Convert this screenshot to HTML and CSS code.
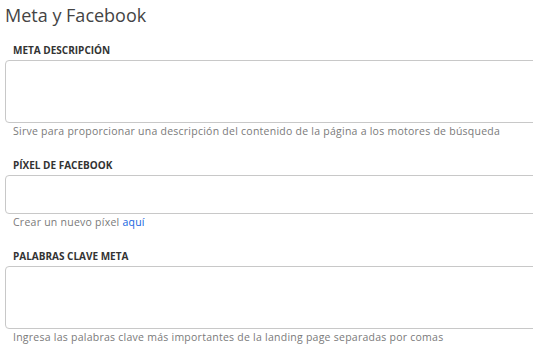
FILE: index.html
```html
<!DOCTYPE html>
<html lang="es">
<head>
<meta charset="utf-8">
<link rel="stylesheet" href="styles.css">
</head>
<body>
<section class="panel">
  <h2 class="title">Meta y Facebook</h2>
  <div class="field">
    <label class="label">META DESCRIPCIÓN</label>
    <textarea class="control area"></textarea>
    <p class="help">Sirve para proporcionar una descripción del contenido de la página a los motores de búsqueda</p>
  </div>
  <div class="field">
    <label class="label">PÍXEL DE FACEBOOK</label>
    <input class="control input" type="text">
    <p class="help">Crear un nuevo píxel <a class="link" href="#">aquí</a></p>
  </div>
  <div class="field">
    <label class="label">PALABRAS CLAVE META</label>
    <textarea class="control area"></textarea>
    <p class="help">Ingresa las palabras clave más importantes de la landing page separadas por comas</p>
  </div>
</section>
</body>
</html>
```

FILE: styles.css
```css
html, body {
  margin: 0;
  padding: 0;
  overflow: hidden;
  background: #fff;
}
body {
  font-family: "Open Sans", "Noto Sans", sans-serif;
  color: #444;
}
.panel {
  padding: 3px 0 0 5px;
  display: flex;
  flex-direction: column;
}
.title {
  margin: 0;
  font-size: 18px;
  line-height: 24px;
  font-weight: 500;
  letter-spacing: 0;
  color: #444;
}
.field {
  display: flex;
  flex-direction: column;
  margin-top: 20px;
}
.title + .field {
  margin-top: 16px;
}
.label {
  padding-left: 8px;
  font-size: 10px;
  line-height: 14px;
  font-weight: 700;
  color: #333;
  margin-bottom: 3px;
}
.control {
  box-sizing: border-box;
  width: 560px;
  border: 1px solid #c8c8c8;
  border-radius: 4px;
  background: #fff;
  margin: 0;
  padding: 6px 8px;
  font: inherit;
  resize: none;
  display: block;
}
.area {
  height: 63px;
}
.input {
  height: 39px;
}
.help {
  margin: 1px 0 0;
  padding-left: 8px;
  font-size: 10.5px;
  line-height: 14px;
  letter-spacing: 0.25px;
  color: #7a7a7a;
}
.link {
  color: #1463e0;
  text-decoration: none;
}
```
